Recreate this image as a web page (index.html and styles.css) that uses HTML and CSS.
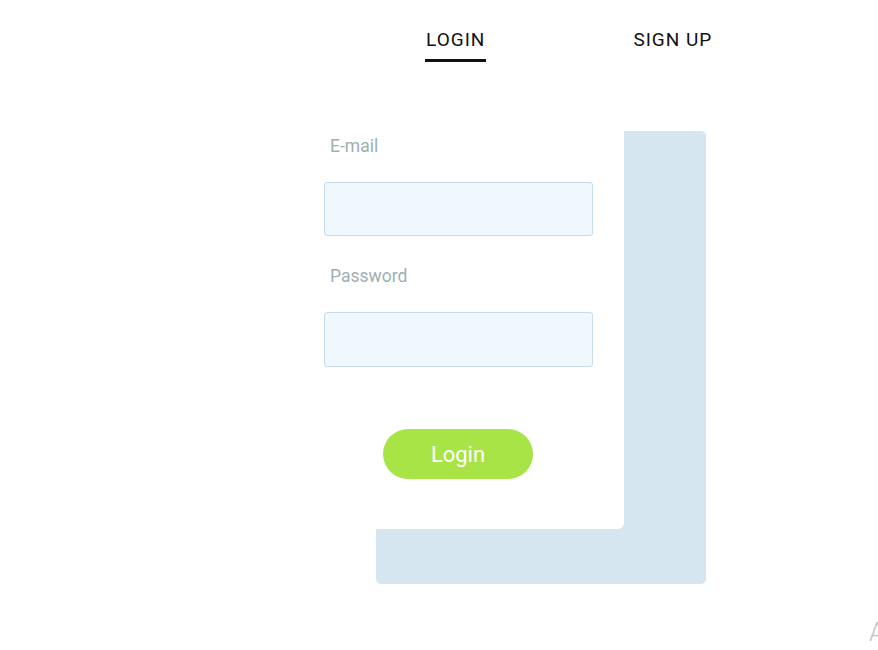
FILE: index.html
```html
<!DOCTYPE html>
<html>
<head>
<meta charset="utf-8">
<link rel="stylesheet" href="styles.css">
</head>
<body>
<div class="page">
  <nav class="tabs">
    <a class="tab active">LOGIN</a>
    <a class="tab">SIGN UP</a>
  </nav>
  <div class="card-wrap">
    <form class="card">
      <label class="label">E-mail</label>
      <div class="input"></div>
      <label class="label">Password</label>
      <div class="input"></div>
      <div class="actions"><button type="button" class="btn">Login</button></div>
    </form>
  </div>
  <div class="corner-text">A</div>
</div>
</body>
</html>
```
FILE: styles.css
```css
html, body { margin: 0; padding: 0; background: #fff; }
body { font-family: Roboto, "Noto Sans", sans-serif; width: 878px; height: 650px; overflow: hidden; }
.page { position: relative; width: 878px; height: 650px; }
.tabs { display: flex; padding-left: 425px; padding-top: 29px; }
.tab { font-size: 19px; letter-spacing: 1px; color: #111; line-height: 22px; padding: 0 1px 8px 1px; }
.tab.active { border-bottom: 3px solid #111; }
.tab + .tab { margin-left: 146px; }
.card-wrap { position: relative; margin-left: 294px; margin-top: 14px; width: 330px; height: 453px; }
.card-wrap::before { content: ""; position: absolute; left: 82px; top: 55px; width: 330px; height: 453px; background: #d6e6f0; border-radius: 5px; }
.card { position: relative; box-sizing: border-box; height: 453px; background: #fff; border-radius: 0 0 6px 0; padding: 60px 0 0 30px; display: flex; flex-direction: column; }
.label { font-size: 17.5px; color: #9db0b2; line-height: 20px; padding-left: 6px; margin-bottom: 26px; }
.input { box-sizing: border-box; width: 269px; height: 54px; background: #eef8fd; border: 1px solid #c8dbeb; border-radius: 3px; margin-bottom: 30px; }
.input + .label + .input { height: 55px; }
.actions { padding-left: 59px; margin-top: 32px; }
.btn { width: 150px; height: 50px; border: none; border-radius: 25px; background: #a8e446; color: #fff; font-family: Roboto, sans-serif; font-size: 22px; padding: 0; }
.corner-text { position: absolute; left: 869px; top: 617px; font-size: 26px; color: #c4c4c4; font-weight: 300; }
```
